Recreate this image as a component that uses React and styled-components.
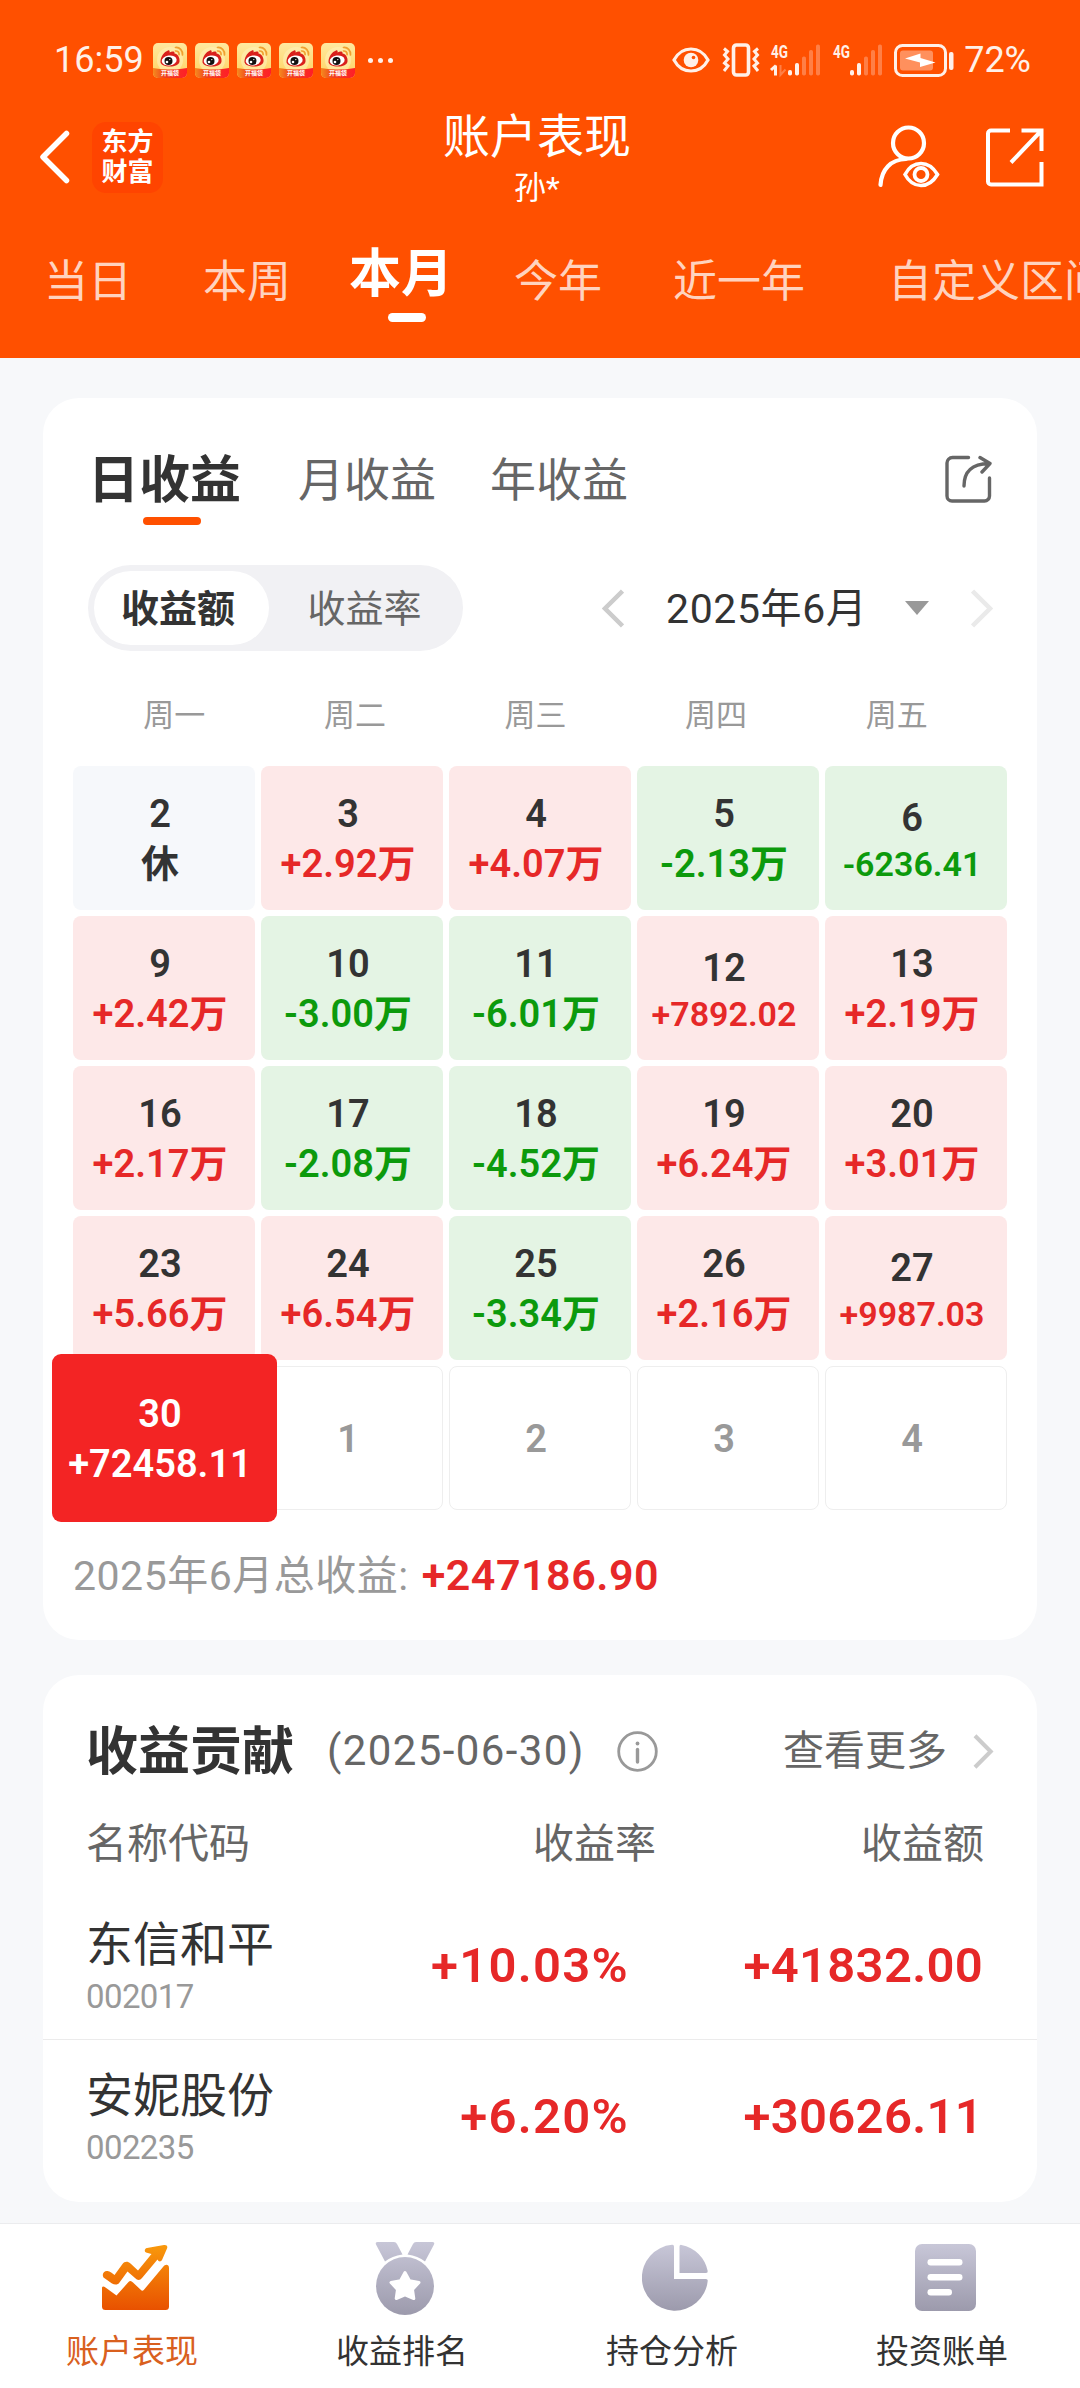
import styled, { createGlobalStyle } from "styled-components"

const COLORS = {
    orange: "#FF5000",
    red: "#E62828",
    green: "#0C9A0C",
    dark: "#333333",
    grey: "#666666",
    light_grey: "#999999",
    status: "#FFF0E8",
}

const periods = [
    { label: "当日", space: 0 },
    { label: "本周", space: 71 },
    { label: "本月", space: 58, active: true },
    { label: "今年", space: 61 },
    { label: "近一年", space: 71 },
    { label: "自定义区间", space: 83 },
]

const weekdays = ["周一", "周二", "周三", "周四", "周五"]

const days = [
    { day: 2, value: "休", type: "rest" },
    { day: 3, value: "+2.92万", type: "up" },
    { day: 4, value: "+4.07万", type: "up" },
    { day: 5, value: "-2.13万", type: "down" },
    { day: 6, value: "-6236.41", type: "down", small: true },
    { day: 9, value: "+2.42万", type: "up" },
    { day: 10, value: "-3.00万", type: "down" },
    { day: 11, value: "-6.01万", type: "down" },
    { day: 12, value: "+7892.02", type: "up", small: true },
    { day: 13, value: "+2.19万", type: "up" },
    { day: 16, value: "+2.17万", type: "up" },
    { day: 17, value: "-2.08万", type: "down" },
    { day: 18, value: "-4.52万", type: "down" },
    { day: 19, value: "+6.24万", type: "up" },
    { day: 20, value: "+3.01万", type: "up" },
    { day: 23, value: "+5.66万", type: "up" },
    { day: 24, value: "+6.54万", type: "up" },
    { day: 25, value: "-3.34万", type: "down" },
    { day: 26, value: "+2.16万", type: "up" },
    { day: 27, value: "+9987.03", type: "up", small: true },
    { day: 30, value: "+72458.11", type: "selected" },
    { day: 1, type: "empty" },
    { day: 2, type: "empty" },
    { day: 3, type: "empty" },
    { day: 4, type: "empty" },
]

const stocks = [
    { name: "东信和平", code: "002017", rate: "+10.03%", amount: "+41832.00" },
    { name: "安妮股份", code: "002235", rate: "+6.20%", amount: "+30626.11" },
]

const cellColors = {
    rest: { background: "#F6F8FB", color: COLORS.dark },
    up: { background: "#FDE8E8", color: COLORS.red },
    down: { background: "#E4F4E4", color: COLORS.green },
    selected: { background: "#F32424", color: "#FFFFFF" },
    empty: { background: "#FFFFFF", color: COLORS.light_grey },
}

/* ---------- icons ---------- */

const WeiboIcon = () => (
    <svg width="34" height="35" viewBox="0 0 34 35">
        <defs>
            <linearGradient id="weiboBg" x1="0" y1="0" x2="0" y2="1">
                <stop offset="0" stopColor="#FFE9A0" />
                <stop offset="1" stopColor="#FFD25E" />
            </linearGradient>
            <linearGradient id="weiboBand" x1="0" y1="0" x2="1" y2="0">
                <stop offset="0" stopColor="#F58A1E" />
                <stop offset="0.35" stopColor="#F0401E" />
                <stop offset="1" stopColor="#FF1E28" />
            </linearGradient>
            <clipPath id="weiboClip"><rect width="34" height="35" rx="5" /></clipPath>
        </defs>
        <g clipPath="url(#weiboClip)">
            <rect width="34" height="35" fill="url(#weiboBg)" />
            <circle cx="17" cy="17" r="13" fill="#FFF0B8" opacity="0.6" />
            <path d="M0 25 Q17 28 34 25 V35 H0Z" fill="url(#weiboBand)" />
            <path d="M7.500 18C8 13 11 9 15 7.500c1.500-.6 2 .6 1.500 2C19 8 22 8 21.500 10.500c3 .3 5.500 4 5 8C26 22 22 23.500 17 23.500S7 22 7.500 18Z" fill="#D9201C" />
            <ellipse cx="16.200" cy="17.500" rx="7.500" ry="5" fill="#fff" transform="rotate(-8 16.200 17.500)" />
            <circle cx="15.500" cy="18" r="4" fill="#111" />
            <circle cx="14" cy="19" r="1.300" fill="#fff" />
            <circle cx="16.800" cy="16.600" r="0.700" fill="#fff" />
            <path d="M22.500 4.500c4-.5 7.500 3 7 7.500M22.500 8c2.300-.2 3.800 1.500 3.600 3.700" fill="none" stroke="#F0A030" strokeWidth="1.700" strokeLinecap="round" />
            <text x="17" y="32" fontSize="6" fontWeight="700" textAnchor="middle" fill="#fff">开福袋</text>
        </g>
    </svg>
)

const EyeIcon = () => (
    <svg width="38" height="26" viewBox="0 0 38 26" fill="none">
        <path d="M2 13C6 5.500 12 2 19 2s13 3.500 17 11c-4 7.500-10 11-17 11S6 20.500 2 13Z" stroke={COLORS.status} strokeWidth="3.200" />
        <circle cx="19" cy="13" r="7.300" fill={COLORS.status} />
        <circle cx="21.500" cy="10.500" r="1.800" fill={COLORS.orange} />
    </svg>
)

const VibrateIcon = () => (
    <svg width="38" height="34" viewBox="0 0 38 34" fill="none" stroke={COLORS.status}>
        <rect x="11.500" y="2" width="15" height="30" rx="3" strokeWidth="3.600" />
        <path d="M2 5.500l3.500 3-3 3.500 3.500 4-3.500 4 3.500 3-4 5M36 5.500l-3.500 3 3 3.500-3.500 4 3.500 4-3.500 3 4 5" strokeWidth="3" />
    </svg>
)

const SignalIcon = ({ arrows }) => (
    <SignalSvg width="50" height="32" viewBox="0 0 50 32" fill={COLORS.status}>
        <text x="0" y="13.500" fontSize="18" fontWeight="700" textLength="17" lengthAdjust="spacingAndGlyphs">4G</text>
        {arrows && <path d="M4.500 21.500v10M0 26l5-4.500" stroke={COLORS.status} strokeWidth="3" fill="none" />}
        {arrows && <path d="M9.500 21v10l5-5.500" stroke={COLORS.status} strokeWidth="2" opacity="0.300" fill="none" />}
        <rect x="17" y="26" width="4" height="5.500" rx="1.800" />
        <rect x="24" y="19" width="4" height="12.500" rx="1.800" />
        <rect x="31" y="12.500" width="4" height="19" rx="1.800" opacity="0.300" />
        <rect x="38" y="6" width="4" height="25.500" rx="1.800" opacity="0.300" />
        <rect x="45" y="0.500" width="4" height="31" rx="1.800" opacity="0.300" />
    </SignalSvg>
)

const BatteryIcon = () => (
    <svg width="60" height="33" viewBox="0 0 60 33" fill="none">
        <rect x="1.500" y="1.500" width="50" height="30" rx="7" stroke={COLORS.status} strokeWidth="3" />
        <rect x="6" y="6.500" width="33" height="20" rx="3" fill={COLORS.status} opacity="0.400" />
        <path d="M11 14.500L26.500 9.500V14L41.500 18.500L26 23V18.500Z" fill="#fff" />
        <rect x="55" y="8" width="4.500" height="18" rx="2" fill={COLORS.status} />
    </svg>
)

const BackIcon = () => (
    <svg width="30" height="54" viewBox="0 0 30 54" fill="none">
        <path d="M26.500 3.500L3 27l23.500 23.500" stroke="#fff" strokeWidth="5.500" strokeLinecap="round" strokeLinejoin="round" />
    </svg>
)

const UserEyeIcon = () => (
    <svg width="62" height="64" viewBox="0 0 62 64" fill="none" stroke="#fff" strokeWidth="4.200" strokeLinecap="round">
        <circle cx="30.500" cy="18" r="15.500" />
        <path d="M2.500 60C3.500 44 13 34.500 28 34" />
        <path d="M27 49.500C31 42 36.500 38.500 43 38.500S55 42 59.500 49.500C55 57 49.500 60.500 43 60.500S31 57 27 49.500Z" strokeWidth="3.600" />
        <circle cx="43" cy="49.500" r="6.500" strokeWidth="3.800" />
    </svg>
)

const ExportIcon = () => (
    <svg width="58" height="59" viewBox="0 0 58 59" fill="none" stroke="#fff" strokeWidth="4">
        <path d="M24 2.500H5a3 3 0 0 0-3 3V53.500a3 3 0 0 0 3 3H55.500V34" />
        <path d="M35.500 2.500H55.500V23M55 3L25 34.500" />
    </svg>
)

const ShareIcon = () => (
    <svg width="47" height="48" viewBox="0 0 47 48" fill="none" stroke={COLORS.grey} strokeWidth="3.400" strokeLinecap="round" strokeLinejoin="round">
        <path d="M23.500 2.500H7.500a5.500 5.500 0 0 0-5.500 5.500V41a5 5 0 0 0 5 5H39.500a5 5 0 0 0 5-5V23" />
        <path d="M19 31C19 17 26 9 44 8.500M35 2.500L45 8.500L37 17" />
    </svg>
)

const ArrowIcon = ({ left, color, width = 22, height = 39 }) => (
    <svg width={width} height={height} viewBox="0 0 22 39" fill="none">
        <path d={left ? "M20.500 2L3 19.500L20.500 37" : "M1.500 2L19 19.500L1.500 37"} stroke={color} strokeWidth="4.500" />
    </svg>
)

const TriangleIcon = () => (
    <svg width="24" height="14" viewBox="0 0 24 14"><path d="M0 0H24L12 14Z" fill={COLORS.light_grey} /></svg>
)

const InfoIcon = () => (
    <svg width="41" height="41" viewBox="0 0 41 41" fill="none" stroke={COLORS.light_grey}>
        <circle cx="20.500" cy="20.500" r="18.800" strokeWidth="2.800" />
        <path d="M20.500 18.500V31" strokeWidth="3.400" strokeLinecap="round" />
        <circle cx="20.500" cy="12.500" r="1.900" fill={COLORS.light_grey} stroke="none" />
    </svg>
)

const greyStops = (
    <>
        <stop offset="0" stopColor="#C8C7D8" />
        <stop offset="1" stopColor="#9C9AAC" />
    </>
)

const ChartIcon = () => (
    <svg width="67" height="67" viewBox="0 0 67 67">
        <defs>
            <linearGradient id="chartFill" x1="0" y1="0" x2="0" y2="67" gradientUnits="userSpaceOnUse">
                <stop offset="0" stopColor="#F99A0C" />
                <stop offset="1" stopColor="#E85000" />
            </linearGradient>
        </defs>
        <g fill="url(#chartFill)">
            <path d="M1.500 33.500C-.5 30 2 26.500 5.500 27c2.500.3 5 2.500 7 4L20.500 20C22.500 17 26 17 28.500 19.500L36 26.500L49.500 10L44 8.500C42 7.500 42.500 4.500 45 4L62 1c2.500-.4 4 1 3 3.500L60 16C59 18 56.500 18 55.500 15.500L40 34C38 36.500 35.500 36.500 33 34L25.500 27.500L17.500 38.500C16 41 12.500 41 10 39.500Z" />
            <path d="M0 43.500C.500 42 2 42.500 3.500 43.500L14.500 51.500L26.500 38C28 36.500 29.500 37 31 38.500L39.500 46.500C41 47 42 46 43 44.500L61 23C63.500 19.500 67 20.500 67 24V62.500Q67 66 63.500 66H3.500Q0 66 0 62.500Z" />
        </g>
    </svg>
)

const MedalIcon = () => (
    <svg width="60" height="74" viewBox="0 0 60 74">
        <defs><linearGradient id="medalFill" x1="0" y1="0" x2="0" y2="74" gradientUnits="userSpaceOnUse">{greyStops}</linearGradient></defs>
        <g fill="url(#medalFill)">
            <path d="M2.500 1H19Q21 1 22 3L27.500 13.500Q17 15 10 20.500L1 3.500Q0 1 2.500 1Z" />
            <path d="M57.500 1H41Q39 1 38 3L32.500 13.500Q43 15 50 20.500L59 3.500Q60 1 57.500 1Z" />
            <circle cx="30" cy="45" r="29" />
        </g>
        <path d="M30 31.500L34.500 39.800L44 41.500L37.500 48.500L38.800 57.500L30 53.800L21.200 57.500L22.500 48.500L16 41.500L25.500 39.800Z" fill="#fff" stroke="#fff" strokeWidth="3" strokeLinejoin="round" />
    </svg>
)

const PieIcon = () => (
    <svg width="66" height="67" viewBox="0 0 66 67">
        <defs><linearGradient id="pieFill" x1="0" y1="0" x2="0" y2="67" gradientUnits="userSpaceOnUse">{greyStops}</linearGradient></defs>
        <path d="M30 .8Q32 .5 32 2.500V35H64Q66 35 65.700 37A33 33 0 1 1 30 .8Z" fill="url(#pieFill)" />
        <path d="M37.500 2.500Q37.500 .5 39.500 .9A33 33 0 0 1 65.700 27Q66 29 64 29H37.500Z" fill="url(#pieFill)" />
    </svg>
)

const BillIcon = () => (
    <svg width="61" height="67" viewBox="0 0 61 67">
        <defs><linearGradient id="billFill" x1="0" y1="0" x2="0" y2="67" gradientUnits="userSpaceOnUse">{greyStops}</linearGradient></defs>
        <rect width="61" height="67" rx="7" fill="url(#billFill)" />
        <g fill="#fff">
            <rect x="12.500" y="15" width="35" height="6.500" rx="3.200" />
            <rect x="12.500" y="30" width="35" height="6.500" rx="3.200" />
            <rect x="12.500" y="45" width="24.500" height="6.500" rx="3.200" />
        </g>
    </svg>
)

const navItems = [
    { label: "账户表现", icon: ChartIcon, active: true },
    { label: "收益排名", icon: MedalIcon },
    { label: "持仓分析", icon: PieIcon },
    { label: "投资账单", icon: BillIcon },
]

/* ---------- sections ---------- */

const StatusBar = () => (
    <StatusRow>
        <StatusText>16:59</StatusText>
        <NotificationIcons>
            {[0, 1, 2, 3, 4].map((item) => <WeiboIcon key={item} />)}
        </NotificationIcons>
        <MoreDots><i /><i /><i /></MoreDots>
        <StatusIcons>
            <EyeIcon />
            <VibrateIcon />
            <SignalIcon arrows />
            <SignalIcon />
            <BatteryIcon />
        </StatusIcons>
        <StatusText>72%</StatusText>
    </StatusRow>
)

const DayTile = ({ item }) => (
    <DayCell $type={item.type}>
        <DayNumber $type={item.type}>{item.day}</DayNumber>
        {item.value && <DayValue $type={item.type} $small={item.small}>{item.value}</DayValue>}
    </DayCell>
)

const StockRow = ({ stock }) => (
    <StockContainer>
        <div>
            <StockName>{stock.name}</StockName>
            <StockCode>{stock.code}</StockCode>
        </div>
        <StockValue $spacing="1.3px">{stock.rate}</StockValue>
        <StockValue $spacing="0.3px">{stock.amount}</StockValue>
    </StockContainer>
)

const App = () => {
    return (
        <Page>
            <GlobalStyles />
            <Header>
                <StatusBar />
                <TitleRow>
                    <TitleLeft>
                        <BackIcon />
                        <Logo><span>东方</span><span>财富</span></Logo>
                    </TitleLeft>
                    <Heading>
                        <Title>账户表现</Title>
                        <Subtitle>孙*</Subtitle>
                    </Heading>
                    <TitleRight>
                        <UserEyeIcon />
                        <ExportIcon />
                    </TitleRight>
                </TitleRow>
                <PeriodTabs>
                    {periods.map((period) => (
                        <PeriodTab key={period.label} $active={period.active} $space={period.space}>{period.label}</PeriodTab>
                    ))}
                </PeriodTabs>
            </Header>

            <CalendarCard>
                <CardTabs>
                    <CardTab $active>日收益</CardTab>
                    <CardTab>月收益</CardTab>
                    <CardTab>年收益</CardTab>
                    <ShareIcon />
                </CardTabs>
                <FilterRow>
                    <Segment>
                        <SegmentButton $active>收益额</SegmentButton>
                        <SegmentButton>收益率</SegmentButton>
                    </Segment>
                    <MonthPicker>
                        <ArrowIcon left color="#CCCCCC" />
                        <MonthText>2025年6月</MonthText>
                        <TriangleIcon />
                        <ArrowIcon color="#EAEAEA" />
                    </MonthPicker>
                </FilterRow>
                <WeekRow>
                    {weekdays.map((weekday) => <span key={weekday}>{weekday}</span>)}
                </WeekRow>
                <DayGrid>
                    {days.map((item, index) => <DayTile key={index} item={item} />)}
                </DayGrid>
                <TotalRow>2025年6月总收益:<b>+247186.90</b></TotalRow>
            </CalendarCard>

            <ContributionCard>
                <ContributionHeader>
                    <CardTitle>收益贡献</CardTitle>
                    <CardDate>(2025-06-30)</CardDate>
                    <InfoIcon />
                    <MoreLink>查看更多<ArrowIcon color="#CCCCCC" width={21} height={35} /></MoreLink>
                </ContributionHeader>
                <ColumnLabels>
                    <span>名称代码</span>
                    <span>收益率</span>
                    <span>收益额</span>
                </ColumnLabels>
                {stocks.map((stock) => <StockRow key={stock.code} stock={stock} />)}
            </ContributionCard>

            <BottomNav>
                {navItems.map(({ label, icon: Icon, active }) => (
                    <NavItem key={label}>
                        <NavIcon><Icon /></NavIcon>
                        <NavLabel $active={active}>{label}</NavLabel>
                    </NavItem>
                ))}
            </BottomNav>
        </Page>
    )
}

export default App

/* ---------- styles ---------- */

const GlobalStyles = createGlobalStyle`
* {
    box-sizing: border-box;
}
body {
    margin: 0;
    background: #F7F8FA;
    font-family: Roboto, "Noto Sans CJK SC", sans-serif;
}
svg {
    display: block;
    flex-shrink: 0;
}
`
const SignalSvg = styled.svg`
overflow: visible;
`
const Page = styled.div`
display: flex;
flex-direction: column;
width: 1080px;
height: 2388px;
overflow: hidden;
white-space: nowrap;
`
const Header = styled.header`
height: 358px;
overflow: hidden;
background: ${COLORS.orange};
`
const StatusRow = styled.div`
display: flex;
align-items: center;
height: 118px;
padding: 2px 49px 0 54px;
`
const StatusText = styled.span`
font-size: 36px;
line-height: 44px;
color: ${COLORS.status};
`
const NotificationIcons = styled.div`
display: flex;
gap: 8px;
margin-left: 9px;
`
const MoreDots = styled.div`
display: flex;
gap: 5px;
margin-left: 13px;
i {
    width: 5px;
    height: 5px;
    border-radius: 50%;
    background: ${COLORS.status};
}
`
const StatusIcons = styled.div`
display: flex;
align-items: center;
gap: 11.5px;
margin-left: auto;
margin-right: 10px;
`
const TitleRow = styled.div`
display: grid;
grid-template-columns: 1fr auto 1fr;
align-items: center;
height: 78px;
padding: 0 36px 0 30px;
`
const TitleLeft = styled.div`
display: flex;
align-items: center;
gap: 22px;
padding-left: 10px;
`
const Logo = styled.div`
display: flex;
flex-direction: column;
align-items: center;
justify-content: center;
width: 71px;
height: 71px;
border-radius: 14px;
background: #FF4400;
font-size: 26px;
font-weight: 700;
line-height: 30px;
color: white;
`
const Heading = styled.div`
display: flex;
flex-direction: column;
align-items: center;
gap: 4px;
margin: -12px 0;
padding-top: 4px;
color: white;
`
const Title = styled.h1`
margin: 0;
font-size: 47px;
font-weight: 400;
line-height: 54px;
`
const Subtitle = styled.span`
font-size: 32px;
line-height: 40px;
`
const TitleRight = styled.div`
display: flex;
align-items: center;
justify-content: flex-end;
gap: 46px;
`
const PeriodTabs = styled.nav`
display: flex;
padding: 56px 0 0 44px;
`
const PeriodTab = styled.div`
flex-shrink: 0;
margin-left: ${(props) => props.$space}px;
margin-top: ${(props) => (props.$active ? "-7px" : "0")};
font-size: ${(props) => (props.$active ? "52px" : "44px")};
font-weight: ${(props) => (props.$active ? 700 : 400)};
line-height: 60px;
color: ${(props) => (props.$active ? "white" : "#FFD3BF")};
&::after {
    content: "";
    display: ${(props) => (props.$active ? "block" : "none")};
    width: 38px;
    height: 9px;
    margin: 8px 0 0 39px;
    border-radius: 5px;
    background: white;
}
`
const Card = styled.section`
margin: 0 43px;
border-radius: 36px;
background: white;
`
const CalendarCard = styled(Card)`
margin-top: 40px;
padding: 52px 30px 39px;
`
const CardTabs = styled.div`
display: flex;
height: 75px;
padding: 0 15px 0 15px;
svg {
    margin: 5px 0 0 auto;
}
`
const CardTab = styled.div`
margin-right: ${(props) => (props.$active ? "57px" : "54px")};
font-size: ${(props) => (props.$active ? "51px" : "46px")};
font-weight: ${(props) => (props.$active ? 700 : 400)};
line-height: ${(props) => (props.$active ? "62px" : "60px")};
color: ${(props) => (props.$active ? COLORS.dark : COLORS.grey)};
&::after {
    content: "";
    display: ${(props) => (props.$active ? "block" : "none")};
    width: 58px;
    height: 8px;
    margin: 5px 0 0 55px;
    border-radius: 4px;
    background: ${COLORS.orange};
}
`
const FilterRow = styled.div`
display: flex;
justify-content: space-between;
margin-top: 40px;
padding: 0 14px 0 15px;
`
const Segment = styled.div`
display: flex;
width: 375px;
height: 86px;
padding: 6px;
border-radius: 43px;
background: #F1F1F4;
`
const SegmentButton = styled.div`
flex: ${(props) => (props.$active ? "0 0 175px" : "1")};
padding-right: ${(props) => (props.$active ? "7px" : "0")};
padding-left: ${(props) => (props.$active ? "0" : "3px")};
border-radius: 37px;
background: ${(props) => (props.$active ? "white" : "transparent")};
font-size: 38px;
font-weight: ${(props) => (props.$active ? 700 : 400)};
line-height: 76px;
text-align: center;
color: ${(props) => (props.$active ? COLORS.dark : COLORS.grey)};
`
const MonthPicker = styled.div`
display: flex;
align-items: center;
svg:last-child {
    margin-left: 42px;
}
`
const MonthText = styled.span`
width: 198px;
margin: 0 41px 0 42px;
padding-top: 2px;
font-size: 41px;
letter-spacing: 0.6px;
line-height: 50px;
color: ${COLORS.dark};
`
const WeekRow = styled.div`
display: grid;
grid-template-columns: repeat(5, 180.6px);
margin: 45px 0 0 11px;
font-size: 31px;
line-height: 40px;
text-align: center;
color: ${COLORS.light_grey};
`
const DayGrid = styled.div`
display: grid;
grid-template-columns: repeat(5, 182px);
grid-auto-rows: 144px;
gap: 6px;
margin-top: 30px;
`
const DayCell = styled.div`
display: flex;
flex-direction: column;
align-items: center;
justify-content: center;
padding: 3px 8px 0 0;
border-radius: 8px;
border: ${(props) => (props.$type === "empty" ? "1px solid #EEEEEE" : "none")};
background: ${(props) => cellColors[props.$type].background};
/* the picked day grows over its neighbours */
${(props) => props.$type === "selected" && `
position: relative;
z-index: 1;
&::before {
    content: "";
    position: absolute;
    z-index: -1;
    inset: -12px -22px -12px -21px;
    border-radius: 9px;
    background: ${cellColors.selected.background};
}
`}
`
const DayNumber = styled.span`
font-size: 38px;
font-weight: 600;
line-height: 49px;
color: ${(props) => (["selected", "empty"].includes(props.$type) ? cellColors[props.$type].color : COLORS.dark)};
`
const DayValue = styled.span`
font-size: ${(props) => (props.$small ? "34px" : "38px")};
font-weight: 600;
line-height: ${(props) => (props.$small ? "43px" : "50px")};
color: ${(props) => cellColors[props.$type].color};
`
const TotalRow = styled.div`
margin-top: 40px;
font-size: 41px;
letter-spacing: 0.5px;
line-height: 50px;
color: ${COLORS.light_grey};
b {
    margin-left: 13px;
    font-size: 43px;
    font-weight: 600;
    color: ${COLORS.red};
}
`
const ContributionCard = styled(Card)`
margin-top: 35px;
padding: 46px 0 12px;
`
const ContributionHeader = styled.div`
display: flex;
align-items: center;
height: 60px;
padding: 0 43px 0 43px;
`
const CardTitle = styled.h2`
margin: 0;
padding-top: 3px;
font-size: 52px;
font-weight: 700;
line-height: 60px;
color: ${COLORS.dark};
`
const CardDate = styled.span`
width: 258px;
margin: 0 32px 0 33px;
font-size: 42px;
letter-spacing: 1.4px;
line-height: 50px;
color: ${COLORS.grey};
`
const MoreLink = styled.div`
display: flex;
align-items: center;
gap: 26px;
margin-left: auto;
font-size: 41px;
line-height: 50px;
color: ${COLORS.grey};
`
const ColumnLabels = styled.div`
display: grid;
grid-template-columns: 1fr auto 328px;
margin-top: 38px;
margin-bottom: 20px;
padding: 0 53px 0 43px;
font-size: 41px;
line-height: 50px;
color: ${COLORS.grey};
span:last-child {
    text-align: right;
}
`
const StockContainer = styled.div`
display: grid;
grid-template-columns: 1fr auto 354px;
height: 150px;
padding: 28px 54px 0 43px;
& + & {
    height: 151px;
    border-top: 1px solid #EBEBEB;
}
`
const StockName = styled.div`
font-size: 47px;
line-height: 56px;
color: ${COLORS.dark};
`
const StockCode = styled.div`
margin-top: 2px;
font-size: 33px;
letter-spacing: -0.6px;
line-height: 44px;
color: ${COLORS.light_grey};
`
const StockValue = styled.div`
font-size: 49px;
font-weight: 600;
letter-spacing: ${(props) => props.$spacing};
line-height: 97px;
text-align: right;
color: ${COLORS.red};
`
const BottomNav = styled.nav`
display: grid;
grid-template-columns: repeat(4, 1fr);
flex: 1;
margin-top: 21px;
border-top: 1px solid #EBECEE;
background: white;
`
const NavItem = styled.div`
display: flex;
flex-direction: column;
align-items: center;
padding-top: 12px;
`
const NavIcon = styled.div`
display: flex;
align-items: center;
justify-content: center;
height: 83px;
`
const NavLabel = styled.span`
margin-top: 13px;
padding-right: 6px;
font-size: 33px;
line-height: 40px;
color: ${(props) => (props.$active ? "#D9601E" : COLORS.dark)};
`
